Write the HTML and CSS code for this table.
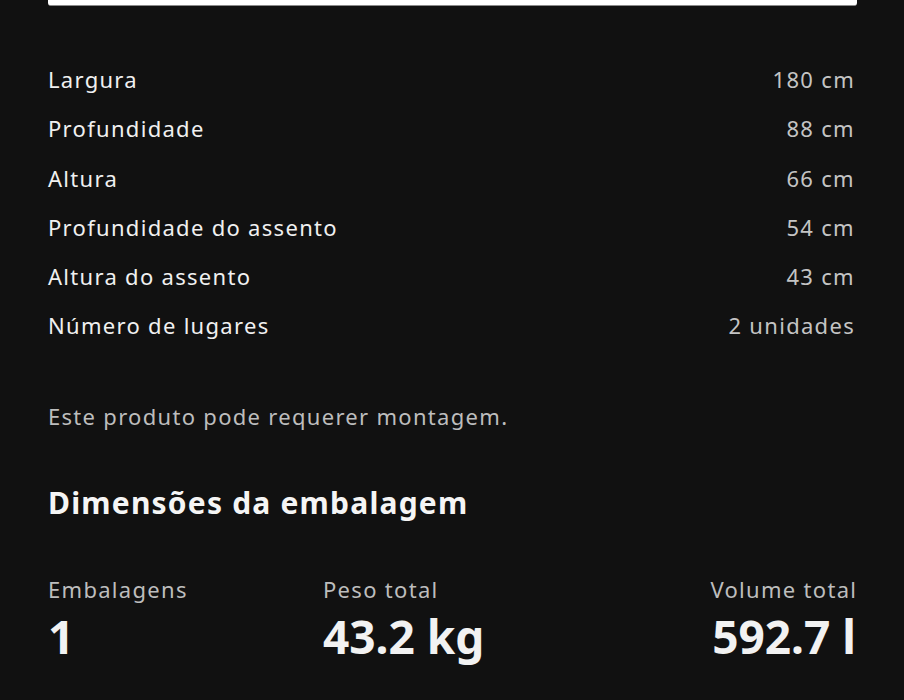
FILE: index.html
```html
<!DOCTYPE html>
<html lang="pt">
<head>
<meta charset="utf-8">
<link rel="stylesheet" href="styles.css">
</head>
<body>
<div class="page">
  <div class="top-bar"></div>
  <dl class="specs">
    <div class="row"><dt>Largura</dt><dd>180 cm</dd></div>
    <div class="row"><dt>Profundidade</dt><dd>88 cm</dd></div>
    <div class="row"><dt>Altura</dt><dd>66 cm</dd></div>
    <div class="row"><dt>Profundidade do assento</dt><dd>54 cm</dd></div>
    <div class="row"><dt>Altura do assento</dt><dd>43 cm</dd></div>
    <div class="row"><dt>Número de lugares</dt><dd>2 unidades</dd></div>
  </dl>
  <p class="note">Este produto pode requerer montagem.</p>
  <h2 class="heading">Dimensões da embalagem</h2>
  <div class="package">
    <div class="stat"><div class="stat-label">Embalagens</div><div class="stat-value">1</div></div>
    <div class="stat"><div class="stat-label">Peso total</div><div class="stat-value">43.2 kg</div></div>
    <div class="stat stat-right"><div class="stat-label">Volume total</div><div class="stat-value">592.7 l</div></div>
  </div>
</div>
</body>
</html>
```
FILE: styles.css
```css
html, body {
  margin: 0;
  padding: 0;
  background: #111111;
}
body {
  font-family: "Noto Sans", "Open Sans", sans-serif;
  color: #f2f2f2;
}
.page {
  padding: 0 48px;
  height: 700px;
  overflow: hidden;
}
.top-bar {
  height: 5px;
  background: #ffffff;
  border-bottom: 1px solid #8a8a8a;
  border-radius: 0 0 3px 3px;
  margin-right: -1px;
}
.specs {
  margin: 49px 0 0;
  padding: 0;
}
.row {
  display: flex;
  justify-content: space-between;
  align-items: center;
  padding: 8px 0;
  font-size: 22px;
  line-height: 33.3px;
  letter-spacing: 1.3px;
}
.row dt {
  color: #f0f0f0;
}
.row dd {
  margin: 0 1px 0 0;
  color: #c4c4c4;
}
.note {
  margin: 49px 0 0;
  font-size: 22px;
  line-height: 33px;
  letter-spacing: 1.3px;
  color: #bdbdbd;
}
.heading {
  margin: 50px 0 0;
  font-size: 30px;
  line-height: 40px;
  font-weight: 700;
  letter-spacing: 1.2px;
  color: #f5f5f5;
}
.package {
  display: grid;
  grid-template-columns: 275px 1fr auto;
  margin-top: 50px;
}
.stat-right {
  text-align: right;
}
.stat-label {
  font-size: 22px;
  line-height: 33px;
  letter-spacing: 1.3px;
  color: #bdbdbd;
}
.stat-right .stat-label {
  margin-right: -1.3px;
}
.stat-value {
  font-size: 46px;
  line-height: 56px;
  font-weight: 700;
  color: #f2f2f2;
  margin-top: 2px;
}
```
